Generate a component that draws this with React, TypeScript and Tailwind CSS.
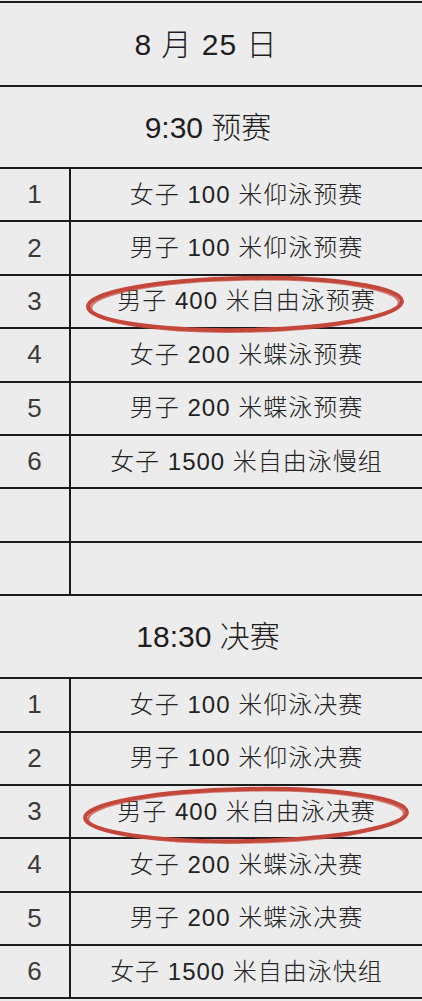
import * as React from "react";

const heats = [
  "女子 100 米仰泳预赛",
  "男子 100 米仰泳预赛",
  "男子 400 米自由泳预赛",
  "女子 200 米蝶泳预赛",
  "男子 200 米蝶泳预赛",
  "女子 1500 米自由泳慢组",
];

const finals = [
  "女子 100 米仰泳决赛",
  "男子 100 米仰泳决赛",
  "男子 400 米自由泳决赛",
  "女子 200 米蝶泳决赛",
  "男子 200 米蝶泳决赛",
  "女子 1500 米自由泳快组",
];

// red hand-drawn ring, coordinates are the row's own pixels
const Ring = ({ cx, cy, rx, ry }: { cx: number; cy: number; rx: number; ry: number }) => (
  <svg
    className="pointer-events-none absolute left-0 top-0 overflow-visible"
    width="422"
    height="53"
    viewBox="0 0 422 53"
  >
    <ellipse
      cx={cx}
      cy={cy}
      rx={rx}
      ry={ry}
      fill="none"
      stroke="#c4473b"
      strokeWidth="4"
      transform={`rotate(-1 ${cx} ${cy})`}
    />
    <ellipse
      cx={cx}
      cy={cy + 1.5}
      rx={rx - 3}
      ry={ry}
      fill="none"
      stroke="#c4473b"
      strokeOpacity="0.7"
      strokeWidth="2.5"
      transform={`rotate(-1 ${cx} ${cy})`}
    />
  </svg>
);

const Row = ({
  no,
  label,
  ring,
}: {
  no?: number;
  label?: string;
  ring?: { cx: number; cy: number; rx: number; ry: number };
}) => (
  <div className="relative flex h-[53.4px] border-b-2 border-[#1c1c1c]">
    <div className="flex w-[71px] shrink-0 items-center justify-center border-r-2 border-[#1c1c1c] text-[26px] text-[#3a3a3a]">
      {no}
    </div>
    <div className="flex flex-1 items-center justify-center text-[24px] font-light tracking-[1px] text-[#222]">
      {label}
    </div>
    {ring && <Ring {...ring} />}
  </div>
);

export default function App() {
  return (
    <div
      className="min-h-[1001px] w-[422px] overflow-hidden bg-[#ececec] pt-px"
      style={{ fontFamily: '"Liberation Sans", "Noto Sans CJK SC", sans-serif' }}
    >
      <div className="flex h-[86px] items-center justify-center border-y-2 border-[#1c1c1c] pr-[10px] text-[30px] font-light tracking-[1px] text-[#1e1e1e]">
        8 月 25 日
      </div>
      <div className="flex h-[82px] items-center justify-center border-b-2 border-[#1c1c1c] pr-[6px] text-[30px] font-light text-[#1e1e1e]">
        9:30 预赛
      </div>

      {heats.map((label, i) => (
        <Row
          key={label}
          no={i + 1}
          label={label}
          ring={i === 2 ? { cx: 245, cy: 28, rx: 157, ry: 26 } : undefined}
        />
      ))}
      <Row />
      <Row />

      <div className="flex h-[83px] items-center justify-center border-b-2 border-[#1c1c1c] pr-[6px] text-[30px] font-light text-[#1e1e1e]">
        18:30 决赛
      </div>

      {finals.map((label, i) => (
        <Row
          key={label}
          no={i + 1}
          label={label}
          ring={i === 2 ? { cx: 246, cy: 29, rx: 161, ry: 26 } : undefined}
        />
      ))}
    </div>
  );
}
